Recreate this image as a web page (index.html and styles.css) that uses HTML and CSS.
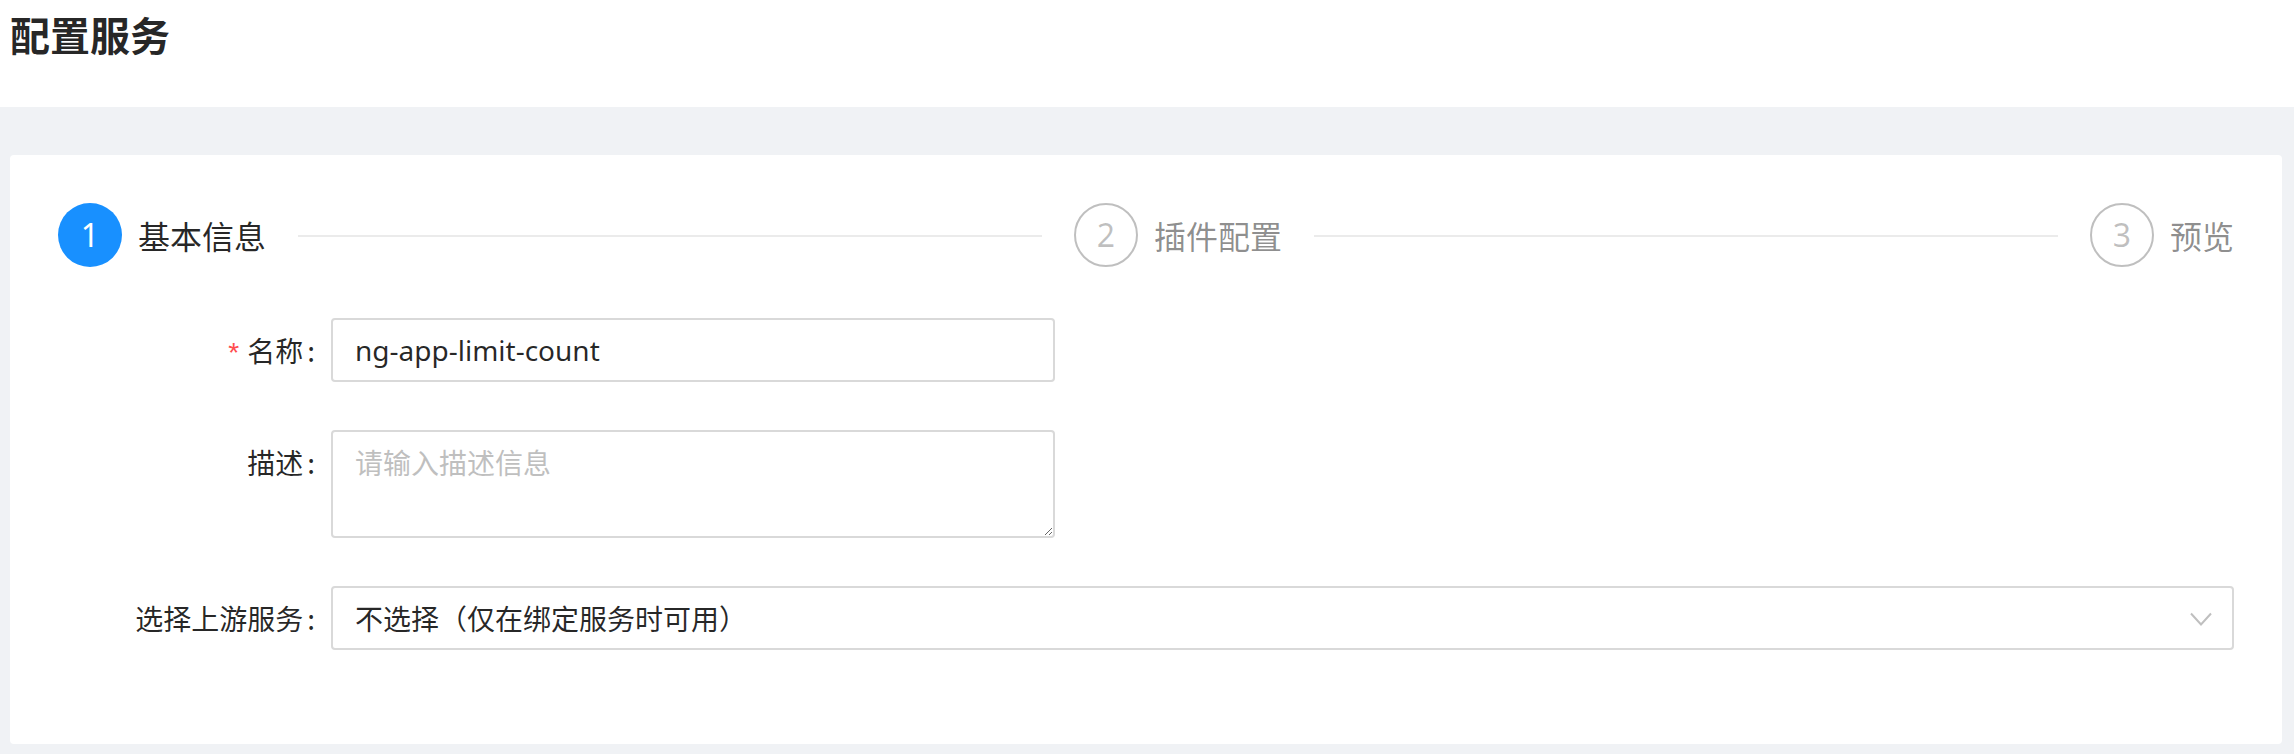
FILE: index.html
```html
<!DOCTYPE html>
<html lang="zh-CN">
<head>
<meta charset="utf-8">
<title>配置服务</title>
<link rel="stylesheet" href="styles.css">
</head>
<body>
<div class="header">
  <h1 class="page-title">配置服务</h1>
</div>
<div class="content">
  <div class="card">
    <div class="steps">
      <div class="step step-active">
        <span class="step-icon">1</span>
        <span class="step-title">基本信息</span>
        <span class="step-line"></span>
      </div>
      <div class="step step-wait">
        <span class="step-icon">2</span>
        <span class="step-title">插件配置</span>
        <span class="step-line"></span>
      </div>
      <div class="step step-wait step-last">
        <span class="step-icon">3</span>
        <span class="step-title">预览</span>
      </div>
    </div>
    <form class="form">
      <div class="form-row">
        <label class="form-label"><span class="required">*</span>名称<span class="colon">:</span></label>
        <div class="form-control">
          <input class="input" type="text" value="ng-app-limit-count">
        </div>
      </div>
      <div class="form-row">
        <label class="form-label">描述<span class="colon">:</span></label>
        <div class="form-control">
          <textarea class="textarea" rows="2" placeholder="请输入描述信息"></textarea>
        </div>
      </div>
      <div class="form-row">
        <label class="form-label">选择上游服务<span class="colon">:</span></label>
        <div class="form-control">
          <div class="select">
            <span class="select-value">不选择（仅在绑定服务时可用）</span>
            <svg class="select-arrow" width="22" height="14" viewBox="0 0 22 14"><polyline points="1,1.5 11,12.5 21,1.5" fill="none" stroke="#bfbfbf" stroke-width="2"/></svg>
          </div>
        </div>
      </div>
    </form>
  </div>
</div>
</body>
</html>
```

FILE: styles.css
```css
* {
  box-sizing: border-box;
}

html, body {
  margin: 0;
  padding: 0;
}

body {
  font-family: "Noto Sans", "Noto Sans CJK SC", sans-serif;
  color: rgba(0, 0, 0, 0.85);
  background: #f0f2f5;
  width: 2294px;
  height: 754px;
  overflow: hidden;
}

.header {
  height: 107px;
  background: #ffffff;
  padding: 0 10px;
}

.page-title {
  margin: 0;
  font-family: "Noto Sans CJK SC", sans-serif;
  font-size: 40px;
  font-weight: 700;
  line-height: 68px;
  color: rgba(0, 0, 0, 0.85);
}

.content {
  padding: 48px 12px 10px 10px;
}

.card {
  background: #ffffff;
  border-radius: 4px;
  padding: 48px 48px 46px;
}

/* Steps */
.steps {
  display: flex;
  margin-bottom: 51px;
}

.step {
  flex: 1 1 0;
  min-width: 0;
  display: flex;
  align-items: center;
  overflow: hidden;
  white-space: nowrap;
  padding-left: 32px;
}

.step:first-child {
  padding-left: 0;
}

.step-last {
  flex: none;
}

.step-icon {
  flex: none;
  width: 64px;
  height: 64px;
  border-radius: 50%;
  display: flex;
  align-items: center;
  justify-content: center;
  font-size: 32px;
  line-height: 1;
  margin-right: 16px;
}

.step-active .step-icon {
  background: #1890ff;
  color: #ffffff;
}

.step-wait .step-icon {
  border: 2px solid rgba(0, 0, 0, 0.25);
  color: rgba(0, 0, 0, 0.25);
}

.step-title {
  flex: none;
  font-family: "Noto Sans CJK SC", sans-serif;
  font-size: 32px;
  line-height: 64px;
  padding-right: 32px;
}

.step-last .step-title {
  padding-right: 0;
}

.step-active .step-title {
  color: rgba(0, 0, 0, 0.85);
}

.step-wait .step-title {
  color: rgba(0, 0, 0, 0.45);
}

.step-line {
  flex: 1 1 auto;
  height: 2px;
  background: #ebebeb;
  margin-top: 2px;
}

/* Form */
.form-row {
  display: grid;
  grid-template-columns: 273px 1fr;
  margin-bottom: 48px;
}

.form-label {
  text-align: right;
  font-family: "Noto Sans CJK SC", sans-serif;
  font-size: 28px;
  line-height: 64px;
  height: 64px;
  color: rgba(0, 0, 0, 0.85);
  white-space: nowrap;
}

.required {
  color: #ff4d4f;
  margin-right: 8px;
  font-family: "Liberation Sans", sans-serif;
}

.colon {
  margin: 0 16px 0 4px;
}

.form-control {
  min-width: 0;
}

.input,
.textarea {
  display: block;
  width: 724px;
  border: 2px solid #d9d9d9;
  border-radius: 4px;
  padding: 8px 22px;
  font-family: "Noto Sans", "Noto Sans CJK SC", sans-serif;
  font-size: 28px;
  color: rgba(0, 0, 0, 0.85);
  background: #ffffff;
  outline: none;
  margin: 0;
}

.input {
  height: 64px;
  line-height: 44px;
}

.textarea {
  height: 108px;
  line-height: 44px;
  resize: vertical;
}

.textarea::placeholder {
  font-family: "Noto Sans CJK SC", sans-serif;
  color: #bfbfbf;
}

.select {
  height: 64px;
  border: 2px solid #d9d9d9;
  border-radius: 4px;
  padding: 0 20px 0 22px;
  display: flex;
  align-items: center;
  justify-content: space-between;
  background: #ffffff;
}

.select-value {
  font-family: "Noto Sans CJK SC", sans-serif;
  font-size: 28px;
  color: rgba(0, 0, 0, 0.85);
}

.select-arrow {
  flex: none;
  margin-top: 2px;
}
```
